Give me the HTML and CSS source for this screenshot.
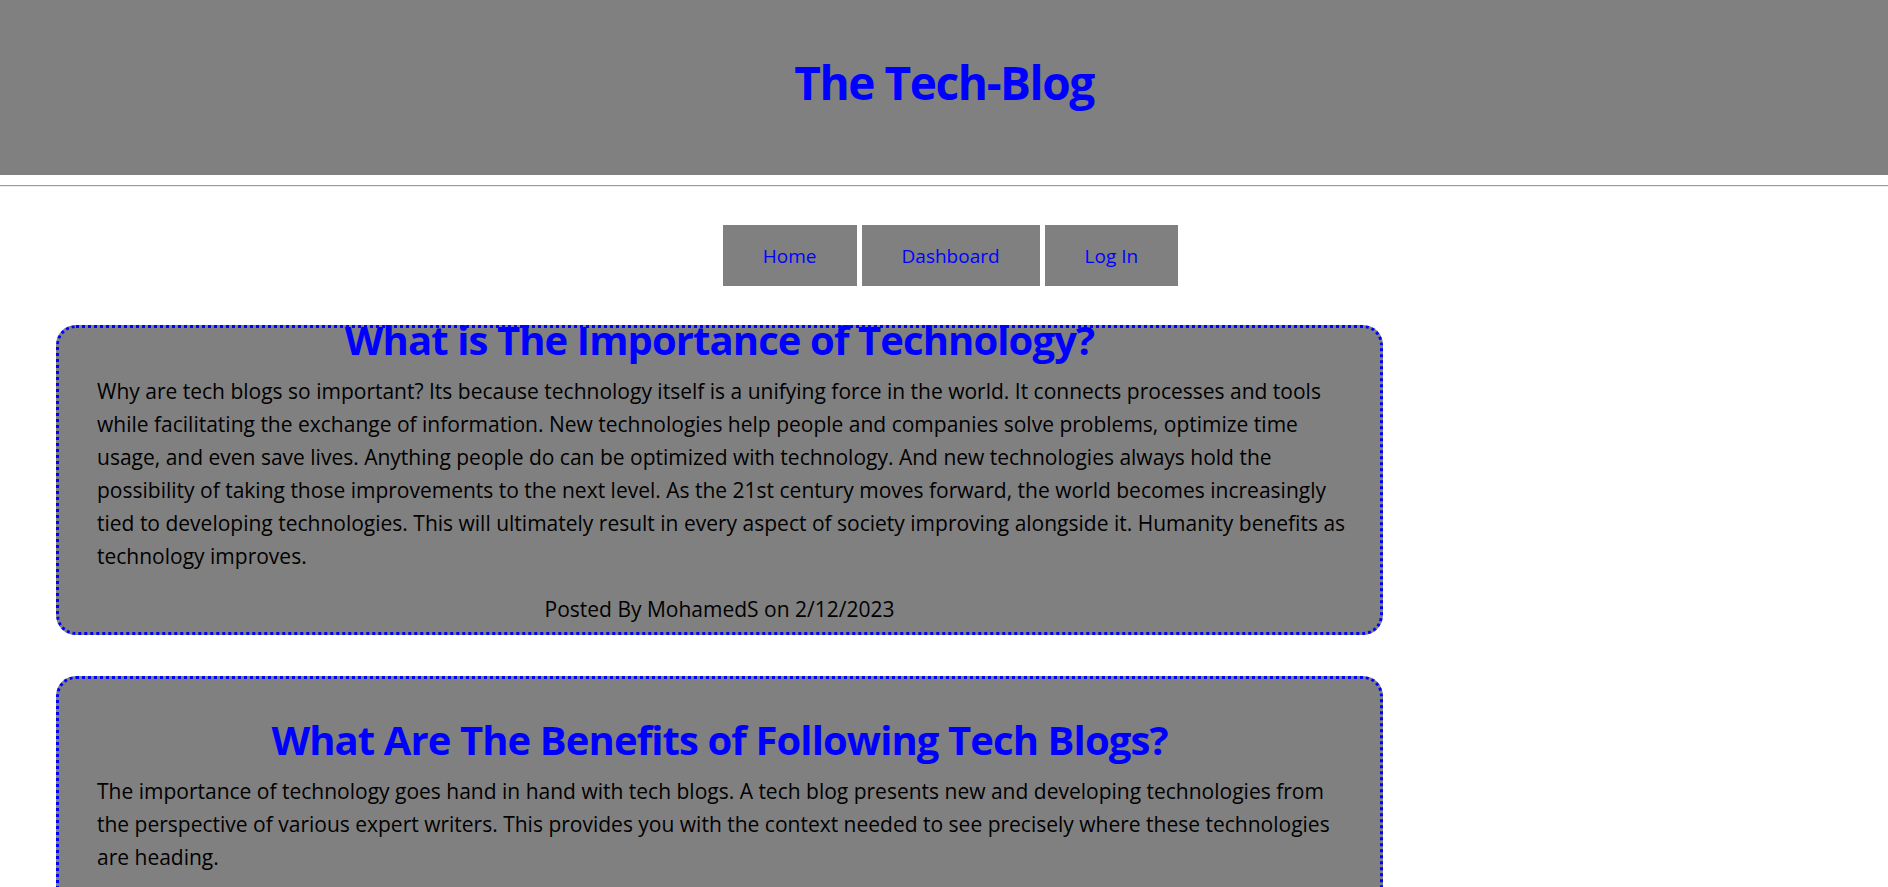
FILE: index.html
```html
<!DOCTYPE html>
<html lang="en">
<head>
<meta charset="utf-8">
<title>The Tech-Blog</title>
<link rel="stylesheet" href="styles.css">
</head>
<body>
<header class="site-header">
  <h1 class="site-title">The Tech-Blog</h1>
</header>
<hr class="divider">
<nav class="nav">
  <a class="nav-btn" href="#">Home</a>
  <a class="nav-btn" href="#">Dashboard</a>
  <a class="nav-btn" href="#">Log In</a>
</nav>
<main class="posts">
  <article class="post post-first">
    <h2 class="post-title">What is The Importance of Technology?</h2>
    <p class="post-body">Why are tech blogs so important? Its because technology itself is a unifying force in the world. It connects processes and tools<br>while facilitating the exchange of information. New technologies help people and companies solve problems, optimize time<br>usage, and even save lives. Anything people do can be optimized with technology. And new technologies always hold the<br>possibility of taking those improvements to the next level. As the 21st century moves forward, the world becomes increasingly<br>tied to developing technologies. This will ultimately result in every aspect of society improving alongside it. Humanity benefits as<br>technology improves.</p>
    <p class="post-meta">Posted By MohamedS on 2/12/2023</p>
  </article>
  <article class="post">
    <h2 class="post-title">What Are The Benefits of Following Tech Blogs?</h2>
    <p class="post-body">The importance of technology goes hand in hand with tech blogs. A tech blog presents new and developing technologies from<br>the perspective of various expert writers. This provides you with the context needed to see precisely where these technologies<br>are heading.</p>
    <p class="post-meta">Posted By MohamedS on 2/12/2023</p>
  </article>
</main>
</body>
</html>
```
FILE: styles.css
```css
html, body {
  margin: 0;
  padding: 0;
  background: #ffffff;
  font-family: "Open Sans", "Noto Sans", "Liberation Sans", sans-serif;
  color: #000000;
}

.site-header {
  box-sizing: border-box;
  height: 175px;
  padding-top: 54px;
  background: #808080;
}

.site-title {
  margin: 0;
  font-size: 46px;
  line-height: 56px;
  font-weight: 700;
  color: #0000ff;
  text-align: center;
  letter-spacing: -1.4px;
}

.divider {
  margin: 10px 0 0;
  height: 0;
  border: 0;
  border-top: 1px solid #9a9a9a;
  border-bottom: 1px solid #eeeeee;
}

.nav {
  display: flex;
  justify-content: center;
  gap: 5px;
  margin-top: 38px;
  padding-left: 13px;
}

.nav-btn {
  display: block;
  box-sizing: border-box;
  height: 61px;
  padding: 1px 40px 0;
  background: #808080;
  color: #0000ff;
  text-decoration: none;
  font-size: 19px;
  line-height: 61px;
}

.posts {
  padding: 0 0 40px 56px;
  margin-top: 39px;
}

.post {
  box-sizing: border-box;
  width: 1327px;
  padding: 0 38px 6px;
  border: 3px dotted #0000ff;
  border-radius: 20px;
  background: #808080;
}

.post + .post {
  margin-top: 41px;
}

.post-title {
  margin: 37px 0 0;
  font-size: 40px;
  line-height: 48px;
  font-weight: 700;
  color: #0000ff;
  text-align: center;
  letter-spacing: -0.9px;
}

.post-first .post-title {
  margin-top: -12px;
}

.post-body {
  margin: 11px 0 0;
  font-size: 21px;
  line-height: 33px;
  white-space: nowrap;
}

.post-meta {
  margin: 20px 0 0;
  font-size: 21px;
  line-height: 33px;
  text-align: center;
}
```
